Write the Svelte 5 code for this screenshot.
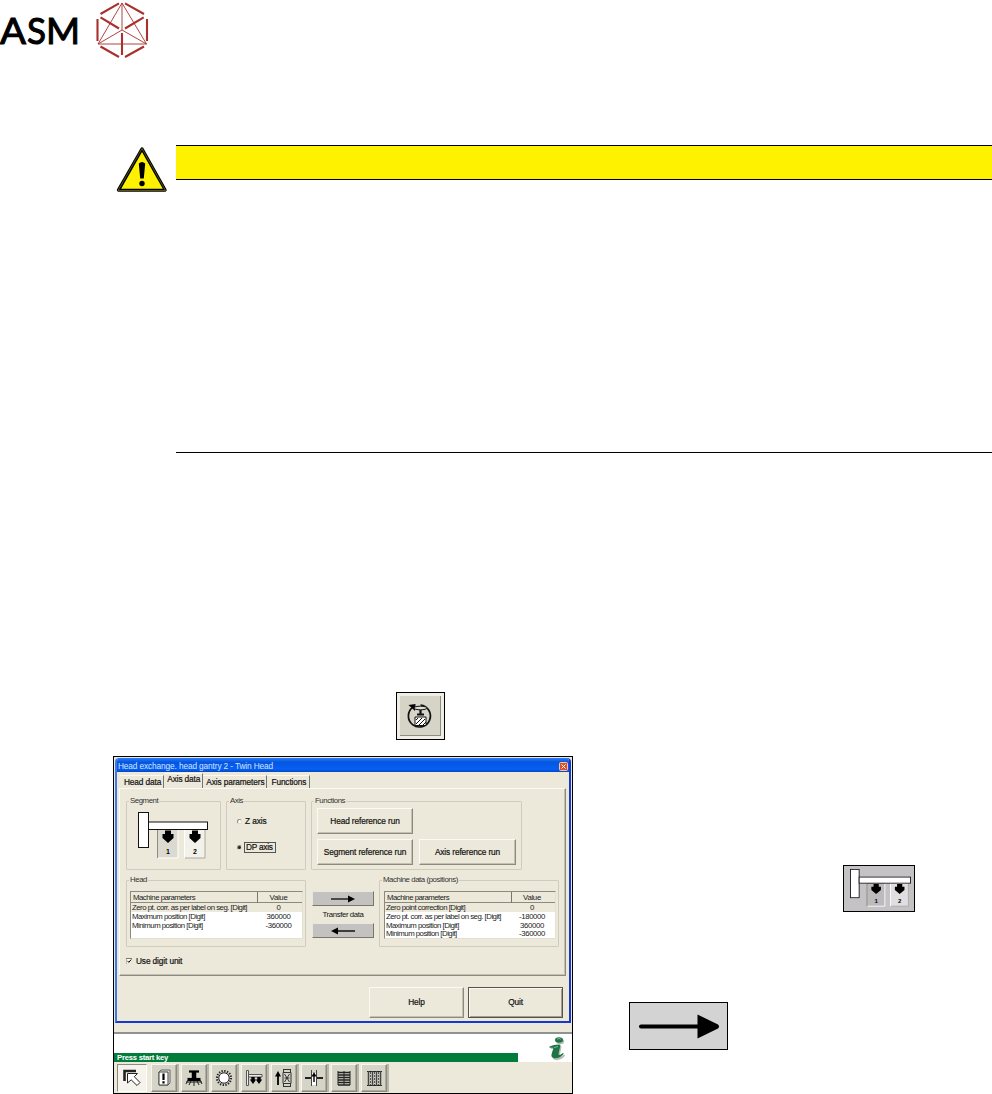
<!-- Manual page: axis data of the head exchange dialog -->

<script lang="ts">
	const tabs = ['Head data', 'Axis data', 'Axis parameters', 'Functions'];
	let activeTab = 'Axis data';
	let axis = 'DP';
	let useDigit = true;

	const headRows = [
		['Zero pt. corr. as per label on seg. [Digit]', '0'],
		['Maximum position [Digit]', '360000'],
		['Minimum position [Digit]', '-360000'],
	];
	const machineRows = [
		['Zero point correction [Digit]', '0'],
		['Zero pt. corr. as per label on seg. [Digit]', '-180000'],
		['Maximum position [Digit]', '360000'],
		['Minimum position [Digit]', '-360000'],
	];
	const tools = ['pointer', 'alert', 'head', 'sun', 'gantry', 'feeder', 'align', 'stack', 'grid'];
</script>

{#snippet segmentIcon(first, second)}
	<svg class="segment-icon" viewBox="0 0 70 47" preserveAspectRatio="none">
		<rect x="19" y="17" width="21" height="29" fill={first} />
		<path d="M19.5 46V17.5H40" fill="none" stroke="#8d8b84" />
		<path d="M20 46H40V18" fill="none" stroke="#fff" />
		<rect x="46" y="17" width="21" height="29" fill={second} />
		<path d="M46.5 46V17.5" fill="none" stroke="#fff" />
		<path d="M47 46H67V18" fill="none" stroke="#aaa89f" />
		<path d="M27 18.500h6v3.500h2.500v4l-5.500 5l-5.500-5V22h2.500z" fill="#000" />
		<path d="M54 18.500h6v3.500h2.500v4l-5.500 5l-5.500-5V22h2.500z" fill="#000" />
		<text x="28" y="42">1</text>
		<text x="55" y="42">2</text>
		<rect x=".5" y=".5" width="10" height="35" fill="#fff" stroke="#111" />
		<rect x="10.5" y="10" width="59" height="7.5" fill="#fff" stroke="#111" />
	</svg>
{/snippet}

{#snippet paramTable(rows)}
	<div class="table">
		<div class="tr th"><span>Machine parameters</span><span>Value</span></div>
		{#each rows as row, i}
			<div class="tr" class:selected={i === 0}><span>{row[0]}</span><span>{row[1]}</span></div>
		{/each}
	</div>
{/snippet}

<div class="page">
	<header>
		<svg width="152" height="62" viewBox="0 0 152 62">
			<g class="brand">
				<text x="0" y="44" textLength="26" lengthAdjust="spacingAndGlyphs">A</text>
				<text x="27" y="44" textLength="19" lengthAdjust="spacingAndGlyphs">S</text>
				<text x="46" y="44" textLength="34" lengthAdjust="spacingAndGlyphs">M</text>
			</g>
			<g fill="none" stroke="#a8302d">
				<path stroke-width=".9" d="M122 3L98 44H146.500ZM122 3V30L98 44M122 30L146.500 44" />
				<path stroke-width="2.1" d="M100.500 14L119 3.300M125 3.300L144 14M97.500 19V41M147 19V41M100.500 46.500L119 57M125 57L144 46.500M100.500 17.300L119 28.500M125 28.500L143.700 17.300M122 33V55" />
			</g>
		</svg>
	</header>

	<section class="notice">
		<svg width="52" height="48" viewBox="0 0 52 48">
			<path d="M26 3L49 44H2.500Z" fill="#000" stroke="#000" stroke-width="3.400" stroke-linejoin="round" />
			<path d="M26 2.500L49.500 44.500H2Z" fill="none" stroke="#8f8a2c" stroke-width=".6" stroke-linejoin="round" />
			<path d="M26 6L46.800 42.800H5.200Z" fill="#fff200" />
			<path d="M22.800 17.500q3.200-3 6.400 0L27.800 32.500h-3.600z" fill="#000" />
			<circle cx="26" cy="37.500" r="2.700" />
		</svg>
		<div class="notice-body">
			<div class="bar"></div>
		</div>
	</section>

	<div class="reference-button">
		<svg width="41" height="40" viewBox="0 0 41 40" fill="none" stroke="#111">
			<path d="M13 11A11 11 0 1 0 20.500 9" stroke-width="1.700" />
			<path d="M8.500 9l7-1-.5 7z" fill="#000" stroke="none" />
			<ellipse cx="20.500" cy="12" rx="6.500" ry="1.800" fill="#e0ded2" />
			<path d="M20.500 14v4M17 18.500h7" stroke-width="2.200" />
			<path d="M15 21h11v8.500H15z" fill="#fff" />
			<path d="M16 28l6-6M19 29l6-6M16 24l2-2M23 29l3-3" />
		</svg>
	</div>

	<div class="figures">
		<div class="screen">
			<div class="dialog">
				<div class="title">
					<span>Head exchange. head gantry 2 - Twin Head</span>
					<svg width="9" height="9" viewBox="0 0 9 9"><rect x=".5" y=".5" width="8" height="8" rx="1" fill="#dd4f2c" stroke="#f3c3ae" /><path d="M2.500 2.500l4 4M6.500 2.500l-4 4" stroke="#fff" /></svg>
				</div>
				<div class="tabs">
					{#each tabs as tab}
						<button class:active={tab === activeTab} on:click={() => (activeTab = tab)}>{tab}</button>
					{/each}
				</div>
				<div class="panel">
					<div class="row">
						<div class="group segment">
							<span class="legend">Segment</span>
							{@render segmentIcon('#dbd9d0', '#f3f2ea')}
						</div>
						<div class="group axis">
							<span class="legend">Axis</span>
							<div class="radio"><i></i><span>Z axis</span></div>
							<div class="radio" class:on={axis === 'DP'}><i></i><span>DP axis</span></div>
						</div>
						<div class="group functions">
							<span class="legend">Functions</span>
							<div class="function-grid">
								<button>Head reference run</button>
								<b></b>
								<button>Segment reference run</button>
								<button>Axis reference run</button>
							</div>
						</div>
					</div>
					<div class="row second">
						<div class="group data">
							<span class="legend">Head</span>
							{@render paramTable(headRows)}
						</div>
						<div class="transfer">
							<button><svg width="26" height="8" viewBox="0 0 26 8"><path d="M1 4h18" stroke="#222" stroke-width="1.500" /><path d="M18 .5L25 4l-7 3.500z" /></svg></button>
							<span>Transfer data</span>
							<button><svg width="26" height="8" viewBox="0 0 26 8"><path d="M7 4h18" stroke="#111" stroke-width="1.500" /><path d="M8 .5L1 4l7 3.500z" /></svg></button>
						</div>
						<div class="group data machine">
							<span class="legend">Machine data (positions)</span>
							{@render paramTable(machineRows)}
						</div>
					</div>
					<div class="check">
						<svg width="6" height="6" viewBox="0 0 6 6"><path d="M0 6V.5H6" fill="#fff" stroke="#77756c" />{#if useDigit}<path d="M1.500 2.800l1.300 1.500L5.200 1.500" fill="none" stroke="#000" />{/if}</svg>
						<span>Use digit unit</span>
					</div>
				</div>
				<div class="actions">
					<button>Help</button>
					<button class="default">Quit</button>
				</div>
			</div>

			<div class="status">
				<div class="message">Press start key</div>
				<svg width="20" height="26" viewBox="0 0 20 26">
					<g fill="#b9bdb9" transform="translate(1.200 1)"><ellipse cx="11" cy="4.500" rx="4" ry="2.800" /><path d="M1.500 11q6-2.500 11-1.800L10.500 18.500q0 2.200 4.500-1l1 1q-4.500 5.500-10 4.500-3.500-1-2.300-4.500l1.800-6.500H1.500z" /></g>
					<g fill="#1d7444"><ellipse cx="11" cy="4" rx="4" ry="2.800" /><path d="M1.500 10.500q6-2.500 11-1.800L10.500 18q0 2.200 4.500-1l.8.8q-4.500 5.200-9.800 4.400-3.500-1-2.300-4.500l1.800-6H1.500z" /></g>
					<path d="M9 3.200q2-1.500 4 0M6 11.500l4-1" fill="none" stroke="#7fb697" />
				</svg>
			</div>

			<div class="toolbar">
				{#each tools as tool}
					<button class={tool}>
						<svg width="20" height="20" viewBox="0 0 20 20" fill="none" stroke="#222">
							{#if tool === 'pointer'}
								<path d="M2.500 13V3H14" stroke-width="2.600" stroke="#222" />
								<path d="M5.500 5.500h10l-3.200 3.200 5.700 5.800-3 3-5.800-5.700-3.700 3.200z" fill="#fff" />
							{:else if tool === 'alert'}
								<path d="M5 4l2-2h9v13l-2 2H5z" fill="#ddd" stroke="#666" />
								<path d="M5 4h9v13H5z" fill="#fff" stroke="#444" />
								<path d="M9.500 5.500v6.500M9.500 13.300v2.200" stroke="#000" stroke-width="2.200" />
							{:else if tool === 'head'}
								<path d="M5 3.500h10" stroke-width="2.200" stroke="#000" />
								<path d="M10 4v7" stroke-width="4.500" stroke="#000" />
								<path d="M3.500 11.500h13" stroke-width="3.200" stroke="#000" />
								<path d="M4 12l-2 4M7 13l-2 4M10 13v5M13 13l2 4M16 12l2 4M2 14h16" />
							{:else if tool === 'sun'}
								<circle cx="10" cy="10" r="7" stroke-width="2.200" stroke-dasharray="1.300 1.450" />
								<circle cx="10" cy="10" r="5.200" fill="#fff" />
							{:else if tool === 'gantry'}
								<path d="M2.500 2.500h2v15h-2zM4.500 6.500H18v2.500H4.500z" fill="#eee" stroke="#555" />
								<path d="M9 9v4M15 9v4" stroke-width="3.400" stroke="#000" />
								<path d="M5.800 11.500h6.400l-3.200 4.500zM11.800 11.500h6.400l-3.200 4.500z" fill="#000" stroke="none" />
							{:else if tool === 'feeder'}
								<path d="M4 6v11" stroke-width="1.800" stroke="#000" />
								<path d="M4 3L1 8.500h6z" fill="#000" stroke="none" />
								<path d="M9 1.500h8M9 18.500h8M9.500 1v3.500M16.500 1v3.500M9 4.500h8v11H9zM9.500 15v4M16.500 15v4M10.500 6l5 8M15.500 6l-5 8M10.500 10h5" stroke="#333" />
							{:else if tool === 'align'}
								<path d="M1 10h6M13 10h6" stroke-width="2" />
								<path d="M7.500 2v16M12.500 2v16" stroke="#444" />
								<path d="M10 5v12" stroke="#fff" stroke-width="4" />
								<path d="M10 7v7" stroke="#000" stroke-width="1.400" />
								<path d="M7.500 8.500L10 4l2.500 4.500z" fill="#000" stroke="none" />
							{:else if tool === 'stack'}
								<path d="M4 3v14M10 3v14M16 3v14" />
								<path d="M4 4.500h12M4 7h12M4 9.500h12M4 12h12M4 14.500h12M4 17h12" stroke-width="1.400" />
							{:else}
								<path d="M3 3.500h15M3 17.500h15" />
								<path d="M4.500 3v15M8.500 3v15M12.500 3v15M16.500 3v15" stroke="#444" stroke-width="1.500" />
								<path d="M6.500 4v13M10.500 4v13M14.500 4v13" stroke="#555" stroke-dasharray="2 1" />
							{/if}
						</svg>
					</button>
				{/each}
			</div>
		</div>

		<div class="side">
			<div class="segment-figure">
				{@render segmentIcon('#bcbabc', '#e0dee0')}
			</div>
			<div class="arrow-figure">
				<svg width="97" height="46" viewBox="0 0 97 46">
					<path d="M11 23.500H70" stroke="#000" stroke-width="4" stroke-linecap="round" />
					<path d="M67.500 11.500L88 21.500q2 2 0 4L67.500 35.500z" />
				</svg>
			</div>
		</div>
	</div>
</div>

<style>
	:global(body) {
		margin: 0;
		background: #fff;
	}
	.page, .page * {
		box-sizing: border-box;
	}
	.page {
		display: flex;
		flex-direction: column;
		width: 992px;
		height: 1094px;
		overflow: hidden;
		font-family: "Liberation Sans", Arial, sans-serif;
		font-size: 8.3px;
		letter-spacing: -0.12px;
		line-height: 9px;
		color: #111;
		white-space: nowrap;
	}
	svg {
		display: block;
		flex: none;
	}
	button {
		font: inherit;
		letter-spacing: inherit;
		color: inherit;
		padding: 0;
		margin: 0;
		border: 0;
		background: none;
		-webkit-text-stroke: 0.2px #111;
	}
	header {
		height: 145px;
	}
	.brand {
		font: 400 37.5px Lato, sans-serif;
		letter-spacing: 0;
		stroke: #000;
		stroke-width: 1.1px;
	}

	.notice {
		display: flex;
		gap: 8px;
		height: 308px;
		padding-left: 116px;
	}
	.notice > svg {
		margin-top: 1px;
	}
	.notice-body {
		flex: 1;
		border-bottom: 1px solid #000;
	}
	.bar {
		height: 35px;
		background: #fff200;
		border-top: 1px solid #000;
		border-bottom: 1px solid #000;
	}

	.reference-button {
		width: 49px;
		height: 48px;
		margin: 239px 0 0 396px;
		padding: 3px;
		border: 1px solid #000;
		background: #d6d3c7;
		box-shadow: inset 3px 3px #efede5, inset -3px -3px #efede5, inset -4px -4px #8f8c80;
	}

	.figures {
		display: flex;
		margin-top: 16px;
		padding-left: 113px;
	}
	.screen {
		width: 460px;
		height: 338px;
		border: 1px solid #000;
		background: #ece9da;
		overflow: hidden;
	}
	.dialog {
		height: 265px;
		margin: 1px 1px 0;
		border: 2px solid #1638cc;
		border-left-color: #3c78e8;
		border-top: 0;
		border-radius: 4px 4px 0 0;
		overflow: hidden;
	}
	.title {
		display: flex;
		justify-content: space-between;
		align-items: center;
		height: 14px;
		margin: 0 -2px;
		padding: 2px 3px 0 3px;
		background: linear-gradient(#2b7cf5, #0555e0 30%, #0560f5 80%, #0349c4);
		color: #d3e4ff;
		letter-spacing: -0.12px;
	}
	.tabs {
		display: flex;
		align-items: flex-end;
		height: 16px;
		padding-left: 3px;
	}
	.tabs button {
		height: 13px;
		padding: 0 2px 0 4px;
		border-right: 1px solid #77756c;
		border-top: 1px solid #faf9f3;
	}
	.tabs button:nth-child(3) {
		padding-left: 3px;
	}
	.tabs button:last-child {
		padding-right: 3px;
	}
	.tabs .active {
		height: 15px;
		padding-bottom: 3px;
		padding-left: 3px;
	}
	.panel {
		height: 188px;
		margin: 0 3px 0 2px;
		padding: 12px 0 0 6px;
		border: 1px solid #8c897e;
		border-top-color: #faf9f3;
		border-left-color: #faf9f3;
		box-shadow: inset -1px -1px #c4c1b3;
	}
	.row {
		display: flex;
		gap: 5px;
	}
	.second {
		margin-top: 10px;
	}
	.group {
		height: 69px;
		border: 1px solid #cfccbe;
		border-radius: 1px;
	}
	.legend {
		display: block;
		width: max-content;
		height: 8px;
		margin: -5px 0 0 2px;
		padding: 0 1px;
		background: #ece9da;
		font-size: 7.8px;
		line-height: 8px;
		letter-spacing: -0.42px;
		color: #333;
	}
	.segment {
		width: 95px;
	}
	.segment-icon text {
		font: bold 7px "Liberation Sans", sans-serif;
	}
	.segment .segment-icon {
		width: 70px;
		height: 47px;
		margin: 7px 0 0 11px;
	}
	.axis {
		width: 80px;
	}
	.functions {
		width: 211px;
	}
	.radio {
		display: flex;
		align-items: center;
		gap: 2px;
		height: 11px;
		margin: 11px 0 0 10px;
		-webkit-text-stroke: 0.2px #111;
	}
	.radio + .radio {
		margin-top: 15px;
	}
	.radio i {
		width: 5px;
		height: 5px;
		border: 1px solid #8f8c82;
		border-right-color: #ddd;
		border-bottom-color: #ddd;
		border-radius: 50%;
		background: #fff;
	}
	.radio.on i {
		background: #222;
	}
	.radio span {
		padding: 0 1px;
	}
	.radio.on span {
		border: 1px solid #55534c;
		width: 32px;
		letter-spacing: -0.25px;
	}
	.function-grid {
		display: grid;
		grid-template: 26px 26px / 96px 97px;
		gap: 5px 6px;
		margin: 3px 0 0 5px;
	}
	.function-grid button, .actions button {
		border: 1px solid #8c897e;
		border-top-color: #fbfaf5;
		border-left-color: #fbfaf5;
		box-shadow: inset -1px -1px #c4c1b3;
	}
	.data {
		width: 180px;
		height: 67px;
	}
	.table {
		width: 173px;
		height: 48px;
		margin: 7px 0 0 3px;
		background: #fff;
		border: 1px solid #8c897e;
		border-right-color: #e3e0d2;
		border-bottom-color: #e3e0d2;
		font-size: 7.8px;
		letter-spacing: -0.5px;
		color: #222;
	}
	.machine .table {
		margin-left: 4px;
		width: 172px;
	}
	.tr {
		display: grid;
		grid-template-columns: 127px 1fr;
		height: 8.8px;
		line-height: 9px;
	}
	.tr span {
		padding-left: 1px;
	}
	.tr span + span {
		padding: 0 3px 0 0;
		text-align: center;
		letter-spacing: -0.35px;
	}
	.th {
		height: 11px;
		line-height: 11px;
		background: #ece9da;
		border-bottom: 1px solid #8c897e;
	}
	.th span:first-child {
		padding-left: 2px;
		border-right: 1px solid #77756c;
	}
	.th span + span {
		padding: 0 3px 0 0;
		letter-spacing: -0.3px;
	}
	.selected {
		background: #ece9da;
	}
	.transfer {
		display: flex;
		flex-direction: column;
		align-items: center;
		width: 62px;
		margin: 11px 0 0 1px;
		font-size: 7.8px;
		letter-spacing: -0.4px;
	}
	.transfer button {
		display: flex;
		align-items: center;
		justify-content: center;
		width: 62px;
		height: 15px;
		background: #c3c2c0;
		border: 1px solid #e8e7e2;
		border-right-color: #77756c;
		border-bottom-color: #77756c;
	}
	.transfer span {
		height: 17px;
		line-height: 17px;
	}
	.check {
		display: flex;
		align-items: center;
		gap: 4px;
		height: 10px;
		margin-top: 9px;
		-webkit-text-stroke: 0.2px #111;
	}
	.actions {
		display: flex;
		justify-content: flex-end;
		gap: 4px;
		margin-top: 11px;
		padding-right: 6px;
	}
	.actions button {
		width: 95px;
		height: 31px;
	}
	.actions .default {
		border-color: #55534c;
		box-shadow: inset 1px 1px #faf9f3, inset -1px -1px #a19e92;
	}

	.status {
		display: flex;
		justify-content: space-between;
		align-items: flex-end;
		height: 30px;
		margin-top: 9px;
		padding-right: 4px;
		background: #fff;
		border-top: 2px solid #8c9390;
	}
	.message {
		width: 404px;
		height: 9px;
		padding-left: 3px;
		background: #027c3b;
		color: #fff;
		font-size: 7.7px;
		font-weight: bold;
		line-height: 9px;
		letter-spacing: -0.24px;
	}
	.toolbar {
		display: flex;
		gap: 4px;
		height: 31px;
		padding: 2px 0 0 3px;
	}
	.toolbar button {
		display: flex;
		align-items: center;
		justify-content: center;
		width: 26px;
		height: 28px;
		background: #d6d3c7;
		border: 1px solid #f6f5ef;
		border-right-color: #8c897e;
		border-bottom-color: #8c897e;
		box-shadow: inset -1px -1px #aeab9f, 2px 0 #b9b6aa;
	}
	.toolbar .pointer {
		width: 30px;
		background: #f5f3ec;
		border-color: #8c897e #fff #fff #8c897e;
		box-shadow: none;
	}

	.segment-figure {
		width: 72px;
		height: 47px;
		margin: 109px 0 0 270px;
		padding: 3px 0 0 6px;
		border: 1px solid #000;
		background: #c4c2c4;
	}
	.segment-figure .segment-icon {
		width: 61px;
		height: 38px;
	}
	.arrow-figure {
		width: 99px;
		height: 48px;
		margin: 90px 0 0 56px;
		border: 1px solid #000;
		background: #d3d3d3;
	}
</style>
